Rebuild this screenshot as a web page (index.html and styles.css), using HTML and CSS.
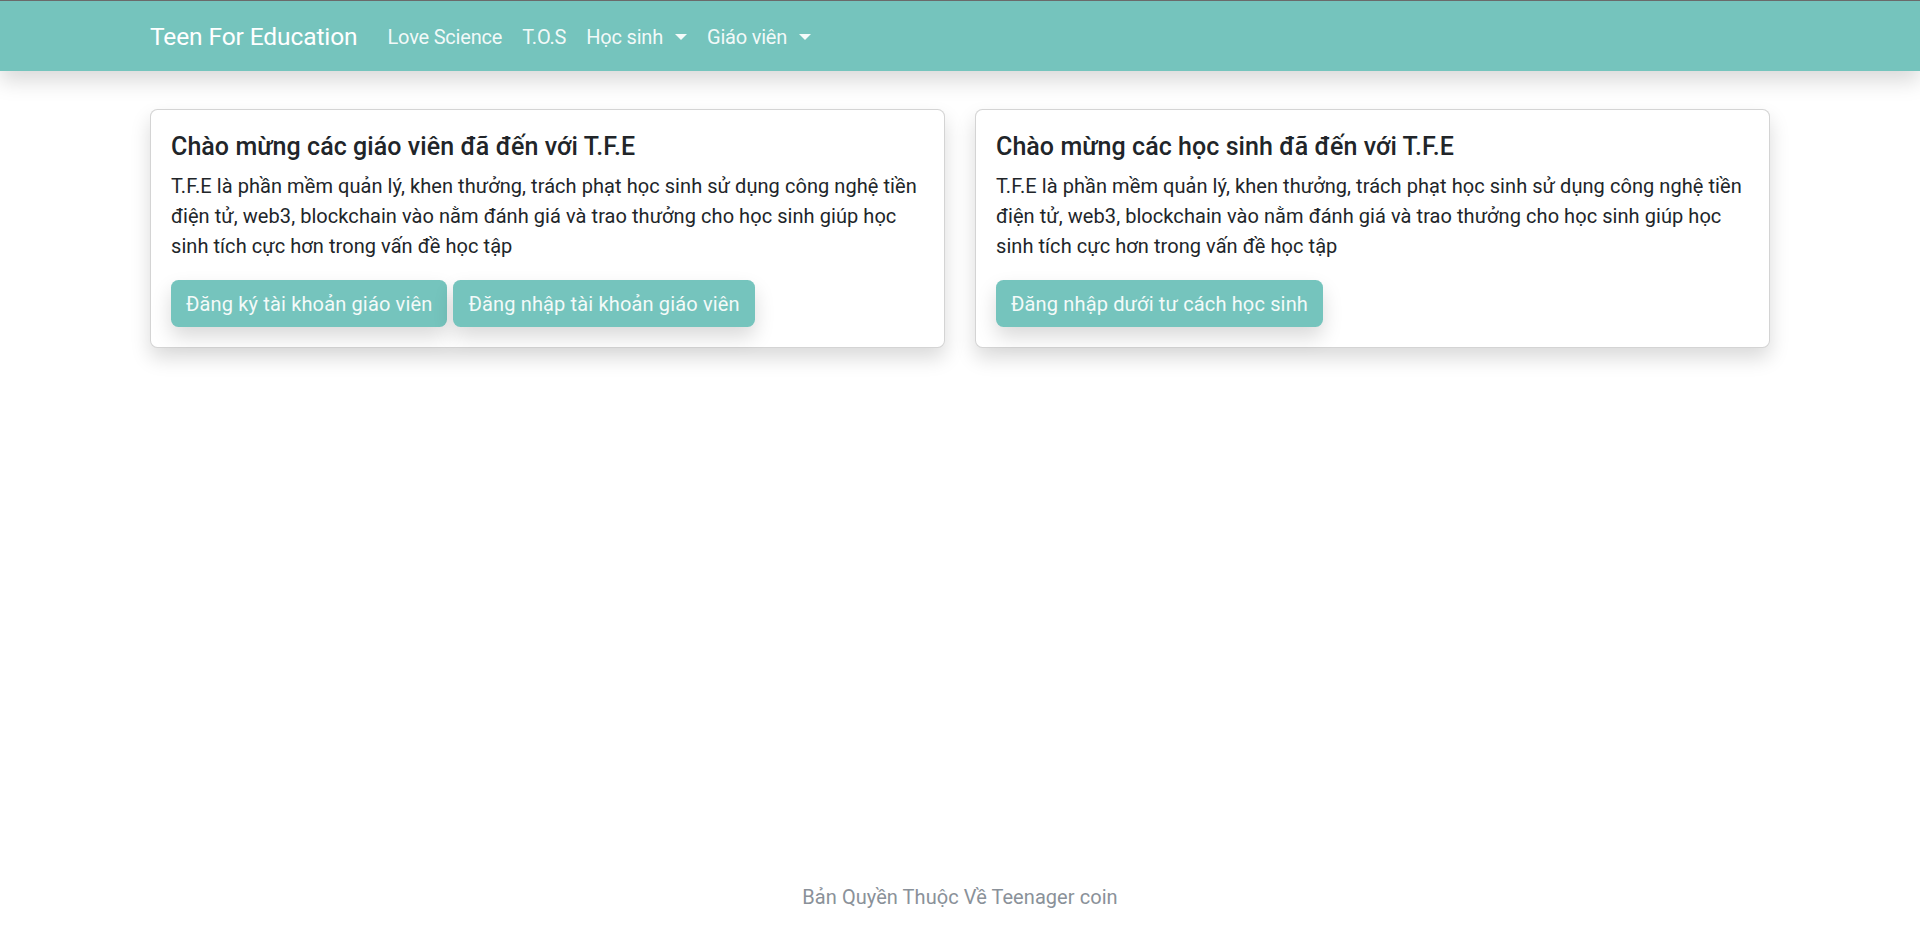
FILE: index.html
```html
<!DOCTYPE html>
<html lang="vi">
<head>
<meta charset="utf-8">
<title>Teen For Education</title>
<link rel="stylesheet" href="styles.css">
</head>
<body>
<nav class="navbar">
  <div class="container nav-inner">
    <a class="brand" href="#">Teen For Education</a>
    <ul class="nav-links">
      <li><a class="nav-link" href="#">Love Science</a></li>
      <li><a class="nav-link" href="#">T.O.S</a></li>
      <li><a class="nav-link dropdown" href="#">Học sinh</a></li>
      <li><a class="nav-link dropdown" href="#">Giáo viên</a></li>
    </ul>
  </div>
</nav>
<main class="main">
  <div class="container cards">
    <div class="card">
      <h5 class="card-title">Chào mừng các giáo viên đã đến với T.F.E</h5>
      <p class="card-text">T.F.E là phần mềm quản lý, khen thưởng, trách phạt học sinh sử dụng công nghệ tiền điện tử, web3, blockchain vào nằm đánh giá và trao thưởng cho học sinh giúp học sinh tích cực hơn trong vấn đề học tập</p>
      <div class="actions">
        <a class="btn" href="#">Đăng ký tài khoản giáo viên</a>
        <a class="btn" href="#">Đăng nhập tài khoản giáo viên</a>
      </div>
    </div>
    <div class="card">
      <h5 class="card-title">Chào mừng các học sinh đã đến với T.F.E</h5>
      <p class="card-text">T.F.E là phần mềm quản lý, khen thưởng, trách phạt học sinh sử dụng công nghệ tiền điện tử, web3, blockchain vào nằm đánh giá và trao thưởng cho học sinh giúp học sinh tích cực hơn trong vấn đề học tập</p>
      <div class="actions">
        <a class="btn" href="#">Đăng nhập dưới tư cách học sinh</a>
      </div>
    </div>
  </div>
</main>
<footer class="footer">Bản Quyền Thuộc Về Teenager coin</footer>
</body>
</html>
```
FILE: styles.css
```css
*{box-sizing:border-box}
html,body{height:100%}
body{
  margin:0;
  font-family:Roboto,"Noto Sans",sans-serif;
  font-size:20px;
  line-height:30px;
  color:#212529;
  background:#fff;
  display:flex;
  flex-direction:column;
  min-height:100vh;
  letter-spacing:0.06px;
}
a{text-decoration:none}
.container{
  width:1650px;
  margin:0 auto;
  padding:0 15px;
}
.navbar{
  background:#75c4bd;
  border-top:1px solid #6a6a6a;
  padding:10px 0;
  box-shadow:0 10px 20px rgba(0,0,0,.15);
  position:relative;
  z-index:1;
}
.nav-inner{
  display:flex;
  align-items:center;
}
.brand{
  color:#fff;
  font-size:24.5px;
  letter-spacing:-0.1px;
  line-height:37.5px;
  padding:7.25px 0 5.25px;
  margin-right:20px;
}
.nav-links{
  list-style:none;
  margin:0;
  padding:0;
  display:flex;
}
.nav-link{
  display:block;
  color:rgba(255,255,255,.92);
  padding:11px 10px 9px;
  line-height:30px;
  letter-spacing:-0.2px;
}
.dropdown::after{
  content:"";
  display:inline-block;
  margin-left:12px;
  vertical-align:4px;
  border-top:6px solid rgba(255,255,255,.92);
  border-left:6px solid transparent;
  border-right:6px solid transparent;
}
.main{
  flex:1;
  padding-top:38px;
}
.cards{
  display:grid;
  grid-template-columns:1fr 1fr;
  column-gap:30px;
  align-items:start;
}
.card{
  background:#fff;
  border:1px solid rgba(0,0,0,.17);
  border-radius:7.5px;
  box-shadow:0 10px 20px rgba(0,0,0,.15);
  padding:20px;
}
.card-title{
  margin:0 0 8px;
  padding-top:2px;
  font-size:25px;
  line-height:30px;
  font-weight:500;
}
.card-text{
  margin:0 0 19px;
  padding-top:1px;
}
.actions{
  font-size:0;
}
.btn{
  display:inline-block;
  font-size:20px;
  line-height:30px;
  letter-spacing:0.15px;
  padding:9.25px 15px 7.25px;
  color:#f3faf9;
  background:#75c4bd;
  border-radius:7.5px;
  box-shadow:0 10px 20px rgba(0,0,0,.15);
  margin-right:6px;
}
.footer{
  text-align:center;
  color:#8a9199;
  font-size:20px;
  line-height:30px;
  padding:0 0 30px;
}
```
